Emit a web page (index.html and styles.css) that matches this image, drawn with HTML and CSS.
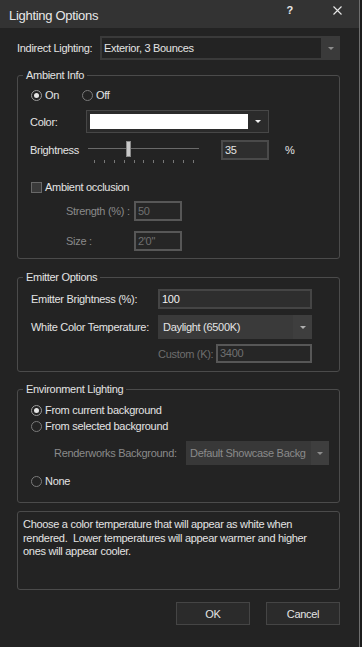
FILE: index.html
```html
<!DOCTYPE html>
<html lang="en">
<head>
  <meta charset="UTF-8" />
  <title>Lighting Options</title>
  <link rel="stylesheet" href="styles.css">
</head>
<body>
  <div class="dialog">
    <div class="titlebar">
      <span class="title">Lighting Options</span>
      <span class="help">?</span>
      <svg class="close" width="9" height="9" viewBox="0 0 9 9">
        <path d="M0.5 0.5 L8.5 8.5 M8.5 0.5 L0.5 8.5" stroke="#e8e8e8" stroke-width="1.1" fill="none" />
      </svg>
    </div>

    <div class="content">
      <div class="row indirect">
        <label class="lbl-indirect">Indirect Lighting:</label>
        <div class="combo combo-frame">
          <span class="combo-field">Exterior, 3 Bounces</span>
          <span class="combo-btn"><i class="arrow arrow-dim"></i></span>
        </div>
      </div>

      <!-- Ambient -->
      <fieldset class="group ambient">
        <legend>Ambient Info</legend>
        <div class="gbody">
          <div class="radios">
            <span class="radio radio-first"><i class="dot on"></i>On</span>
            <span class="radio"><i class="dot"></i>Off</span>
          </div>
          <div class="row color-row">
            <label class="lbl-color">Color:</label>
            <div class="combo-color">
              <span class="swatch"></span>
              <span class="color-btn"><i class="arrow arrow-white"></i></span>
            </div>
          </div>
          <div class="row bright-row">
            <label class="lbl-bright">Brightness</label>
            <div class="slider">
              <div class="track"></div>
              <div class="thumb"></div>
              <div class="ticks">
                <i></i><i></i><i></i><i></i><i></i><i></i><i></i><i></i><i></i><i></i><i></i>
              </div>
            </div>
            <div class="field field-bright">35</div>
            <span class="pct">%</span>
          </div>
          <div class="check-row">
            <i class="checkbox"></i>Ambient occlusion
          </div>
          <div class="row sub-row strength">
            <label class="lbl-sub">Strength (%) :</label>
            <div class="field field-off">50</div>
          </div>
          <div class="row sub-row size">
            <label class="lbl-sub">Size :</label>
            <div class="field field-off">2'0"</div>
          </div>
        </div>
      </fieldset>

      <!-- Emitter -->
      <fieldset class="group emitter">
        <legend>Emitter Options</legend>
        <div class="gbody">
          <div class="row">
            <label class="lbl-emit">Emitter Brightness (%):</label>
            <div class="field field-wide">100</div>
          </div>
          <div class="row temp-row">
            <label class="lbl-emit">White Color Temperature:</label>
            <div class="combo combo-flat">
              <span class="combo-text">Daylight (6500K)</span>
              <span class="combo-btn"><i class="arrow"></i></span>
            </div>
          </div>
          <div class="row custom-row">
            <label class="lbl-custom">Custom (K):</label>
            <div class="field field-off field-custom">3400</div>
          </div>
        </div>
      </fieldset>

      <!-- Environment -->
      <fieldset class="group env">
        <legend>Environment Lighting</legend>
        <div class="gbody">
          <div class="radio env-radio"><i class="dot on"></i>From current background</div>
          <div class="radio env-radio second"><i class="dot"></i>From selected background</div>
          <div class="row rw-row">
            <label class="lbl-rw">Renderworks Background:</label>
            <div class="combo combo-off">
              <span class="combo-text">Default Showcase Backg</span>
              <span class="combo-btn"><i class="arrow arrow-dim"></i></span>
            </div>
          </div>
          <div class="radio env-radio none"><i class="dot"></i>None</div>
        </div>
      </fieldset>

      <div class="info">
        Choose a color temperature that will appear as white when<br>
        rendered.&nbsp; Lower temperatures will appear warmer and higher<br>
        ones will appear cooler.
      </div>

      <div class="buttons">
        <button class="btn">OK</button>
        <button class="btn">Cancel</button>
      </div>
    </div>
  </div>
</body>
</html>
```

FILE: styles.css
```css
body {
  margin: 0;
  background: #1c1c1c;
  font-family: "Liberation Sans", Arial, sans-serif;
  font-size: 11px;
  letter-spacing: -0.3px;
  color: #e4e4e4;
}
.dialog {
  width: 359px;
  height: 647px;
  background: #232323;
  border-right: 1px solid #6e6e6e;
}
.titlebar {
  display: flex;
  align-items: flex-start;
  height: 28px;
  background: #333333;
}
.title {
  flex: 1;
  margin: 8px 0 0 9px;
  font-size: 13px;
  letter-spacing: -0.3px;
  color: #e8e8e8;
}
.help {
  margin-top: 4px;
  font-size: 11px;
  font-weight: bold;
  color: #e8e8e8;
}
.close {
  margin: 6px 17px 0 40px;
}
.content {
  padding: 0 19px 0 17px;
}
.row {
  display: flex;
  align-items: center;
}
label {
  flex-shrink: 0;
  white-space: nowrap;
}
.indirect {
  margin-top: 8px;
  height: 24px;
}
.lbl-indirect {
  width: 83px;
}

/* combos */
.combo {
  display: flex;
  height: 24px;
  box-sizing: border-box;
}
.combo-frame {
  width: 242px;
  background: #3a3a3a;
  padding: 2px 0 2px 2px;
}
.combo-field {
  flex: 1;
  background: #232323;
  padding-left: 2px;
  line-height: 20px;
}
.combo-btn {
  width: 19px;
  display: flex;
  align-items: center;
  justify-content: center;
}
.arrow {
  width: 0;
  height: 0;
  border-left: 3px solid transparent;
  border-right: 3px solid transparent;
  border-top: 3px solid #b0b0b0;
}
.arrow-dim {
  border-top-color: #8c8c8c;
}
.arrow-white {
  border-top-color: #f0f0f0;
}
.combo-flat {
  width: 154px;
  background: #3a3a3a;
}
.combo-flat .combo-text {
  flex: 1;
  padding-left: 5px;
  line-height: 24px;
}
.combo-flat .combo-btn {
  background: #3e3e3e;
}
.combo-off {
  width: 143px;
  background: #383838;
  color: #8a8a8a;
}
.combo-off .combo-text {
  flex: 1;
  padding-left: 4px;
  line-height: 24px;
  white-space: nowrap;
  overflow: hidden;
}
.combo-off .combo-btn {
  width: 18px;
  flex-shrink: 0;
  background: #3e3e3e;
}

/* group boxes */
.group {
  margin: 0;
  padding: 0;
  min-width: 0;
  border: 1px solid #4b4b4b;
  border-radius: 3px;
}
.group legend {
  margin-left: 5px;
  padding: 0 3px;
  line-height: 14px;
}
.ambient {
  margin-top: 8px;
}
.ambient .gbody {
  padding: 6px 0 7px 12px;
}
.radios {
  display: flex;
  height: 14px;
  align-items: center;
  padding-left: 1px;
}
.radio {
  display: flex;
  align-items: center;
}
.radio-first {
  width: 51px;
}
.dot {
  width: 9px;
  height: 9px;
  border: 1px solid #7a7a7a;
  border-radius: 50%;
  margin-right: 3px;
  display: flex;
  align-items: center;
  justify-content: center;
}
.dot.on {
  border-color: #9a9a9a;
}
.dot.on::after {
  content: "";
  width: 5px;
  height: 5px;
  border-radius: 50%;
  background: #e6e6e6;
}
.color-row {
  margin-top: 8px;
}
.lbl-color {
  width: 56px;
}
.combo-color {
  display: flex;
  width: 183px;
  height: 23px;
  box-sizing: border-box;
  border: 1px solid #474747;
  background: #2b2b2b;
  padding: 3px 0 3px 3px;
}
.swatch {
  flex: 1;
  background: #ffffff;
}
.color-btn {
  width: 20px;
  display: flex;
  align-items: center;
  justify-content: center;
}
.bright-row {
  margin-top: 7px;
  align-items: flex-start;
}
.lbl-bright {
  width: 58px;
  line-height: 20px;
}
.slider {
  position: relative;
  width: 111px;
  height: 24px;
}
.track {
  margin-top: 8px;
  height: 1px;
  background: #6a6a6a;
}
.thumb {
  position: absolute;
  left: 38px;
  top: 1px;
  width: 3px;
  height: 14px;
  background: #c9c9c9;
  border: 1px solid #8a8a8a;
}
.ticks {
  display: flex;
  justify-content: space-between;
  margin-top: 11px;
  padding: 0 5px 0 6px;
}
.ticks i {
  width: 1px;
  height: 3px;
  background: #777;
}
.field {
  height: 20px;
  box-sizing: border-box;
  border: 2px solid #4a4a4a;
  background: #2e2e2e;
  padding-left: 2px;
  line-height: 16px;
}
.field-bright {
  width: 48px;
  margin-left: 22px;
}
.pct {
  margin-left: 16px;
  line-height: 20px;
}
.check-row {
  display: flex;
  align-items: center;
  height: 14px;
  margin-top: 16px;
  padding-left: 1px;
}
.checkbox {
  width: 9px;
  height: 9px;
  border: 1px solid #686868;
  background: #3a3a3a;
  margin-right: 3px;
}
.sub-row {
  padding-left: 36px;
  margin-top: 7px;
}
.sub-row.size {
  margin-top: 10px;
}
.lbl-sub {
  width: 68px;
  color: #8a8a8a;
}
.field-off {
  width: 48px;
  border-color: #575757;
  background: #262626;
  color: #707070;
}

/* emitter */
.emitter {
  margin-top: 11px;
}
.emitter .gbody {
  padding: 5px 0 8px 13px;
}
.lbl-emit {
  width: 127px;
}
.field-wide {
  width: 154px;
  border-color: #454545;
  color: #f2f2f2;
}
.temp-row {
  margin-top: 6px;
}
.custom-row {
  margin-top: 5px;
  padding-left: 127px;
}
.lbl-custom {
  width: 58px;
  color: #6e6e6e;
}
.field-custom {
  width: 96px;
  height: 19px;
  line-height: 15px;
}

/* environment */
.env {
  margin-top: 10px;
}
.env .gbody {
  padding: 7px 0 14px 13px;
}
.env-radio {
  height: 14px;
}
.env-radio.second {
  margin-top: 2px;
}
.rw-row {
  margin-top: 8px;
  padding-left: 23px;
}
.lbl-rw {
  width: 132px;
  color: #8a8a8a;
}
.env-radio.none {
  margin-top: 9px;
}

/* info + buttons */
.info {
  margin-top: 8px;
  height: 79px;
  box-sizing: border-box;
  border: 1px solid #4b4b4b;
  border-radius: 3px;
  padding: 6px 5px;
  line-height: 13.5px;
  white-space: nowrap;
}
.buttons {
  display: flex;
  justify-content: flex-end;
  gap: 16px;
  margin-top: 12px;
}
.btn {
  width: 74px;
  height: 23px;
  background: #2b2b2b;
  border: 1px solid #454545;
  color: #e4e4e4;
  font-family: inherit;
  font-size: 11px;
  letter-spacing: inherit;
}
```
